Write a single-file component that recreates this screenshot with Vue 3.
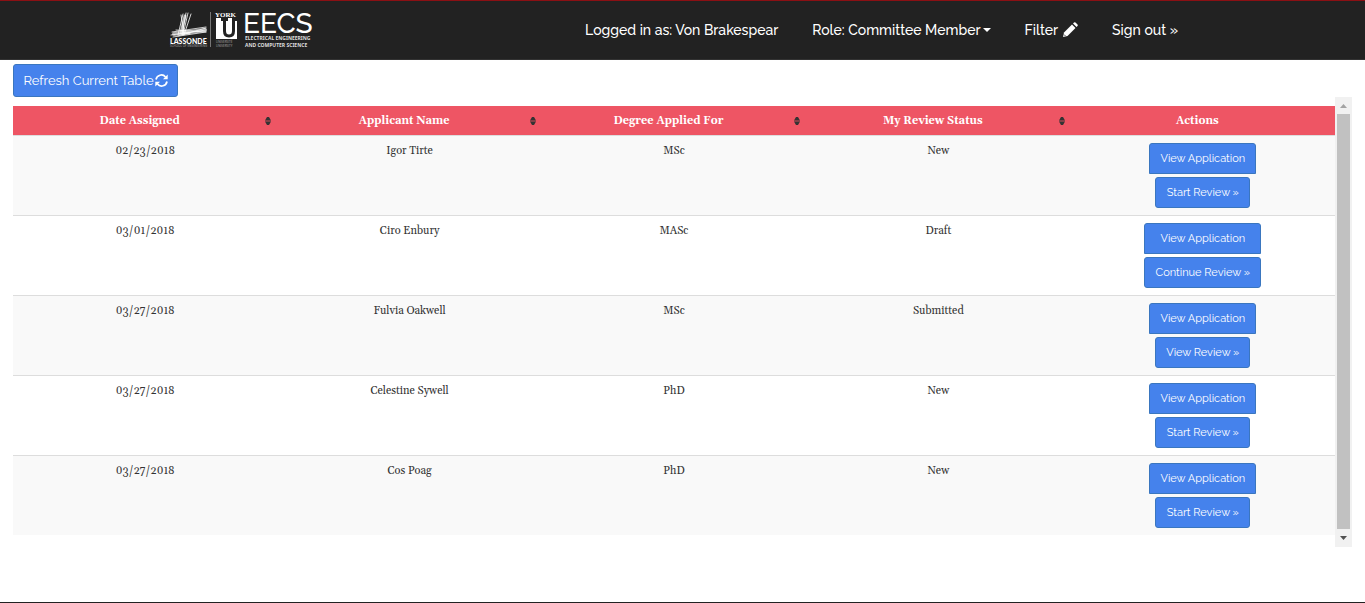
<script setup>
import { ref } from 'vue'

const columns = ['Date Assigned', 'Applicant Name', 'Degree Applied For', 'My Review Status']
const rows = ref([
  { date: '02/23/2018', name: 'Igor Tirte', degree: 'MSc', status: 'New', action: 'Start Review »' },
  { date: '03/01/2018', name: 'Ciro Enbury', degree: 'MASc', status: 'Draft', action: 'Continue Review »' },
  { date: '03/27/2018', name: 'Fulvia Oakwell', degree: 'MSc', status: 'Submitted', action: 'View Review »' },
  { date: '03/27/2018', name: 'Celestine Sywell', degree: 'PhD', status: 'New', action: 'Start Review »' },
  { date: '03/27/2018', name: 'Cos Poag', degree: 'PhD', status: 'New', action: 'Start Review »' }
])
</script>

<template>
  <div class="page">
    <header class="navbar">
      <div class="navbar-inner">
        <a class="brand" href="#" aria-label="Lassonde, York University EECS">
          <svg class="logo" width="148" height="40" viewBox="0 0 148 40">
            <g fill="none" stroke="#fff" stroke-linecap="round">
              <path d="M13 4 8 25M16 3l-4 22M18 3l-5 22M21 4l-7 21M11 5l3 18" stroke-width="1" opacity=".8" />
              <path d="M2 22l34-5M1 25l35-5M3 27l33-5M6 20l30 2M8 26l28-8" stroke-width="1" opacity=".75" />
              <path d="M15 6l-4 17h8" stroke-width="3" opacity=".7" />
              <path d="M4 24l31-4" stroke-width="4" opacity=".6" />
            </g>
            <text x="0" y="34" class="lassonde">LASSONDE</text>
            <text x="0" y="37" class="tiny">SCHOOL OF ENGINEERING</text>
            <path d="M40.500 2v35" stroke="#777" />
            <text x="45" y="7" class="york">YORK</text>
            <path d="M46 8h21v21H46z" fill="#fff" />
            <path d="M51 9.500h7M62 9.500h5M54.500 9v12q0 5 4.500 5t4.500-5V9" fill="none" stroke="#222" stroke-width="3" />
            <text x="46" y="33" class="tiny">UNIVERSITÉ</text>
            <text x="46" y="37" class="tiny">UNIVERSITY</text>
            <text x="73" y="23" class="eecs">EECS</text>
            <text x="75" y="30" class="dept">ELECTRICAL ENGINEERING</text>
            <text x="75" y="37" class="dept">AND COMPUTER SCIENCE</text>
          </svg>
        </a>
        <nav class="nav">
          <span class="nav-item user">Logged in as: Von Brakespear</span>
          <button type="button" class="nav-item role">Role: Committee Member<span class="caret"></span></button>
          <button type="button" class="nav-item filter">
            Filter
            <svg width="16" height="16" viewBox="0 0 16 16" fill="#fff">
              <path d="M1 15l1-4.500L10 2.500 13.500 6l-8 8z" />
              <path d="M11 1.500l1-1q.7-.7 1.500 0l2 2q.7.800 0 1.500l-1 1z" />
              <path d="M2 12.500L3.500 14" stroke="#222" stroke-width=".8" />
            </svg>
          </button>
          <a class="nav-item" href="#">Sign out »</a>
        </nav>
      </div>
    </header>

    <main class="content">
      <button type="button" class="btn refresh">
        Refresh Current Table
        <svg width="13" height="13" viewBox="0 0 13 13">
          <g fill="none" stroke="#fff" stroke-width="1.700">
            <path d="M1 5.500A5.400 5.400 0 0 1 10.500 3" />
            <path d="M12 7.500A5.400 5.400 0 0 1 2.500 10" />
          </g>
          <path d="M12.700.5v4.700H8zM.3 12.500V7.800H5z" fill="#fff" />
        </svg>
      </button>
      <div class="table-area">
        <table class="reviews">
          <thead>
            <tr>
              <th v-for="column in columns" :key="column" scope="col">
                <span class="heading">{{ column }}
                  <svg class="sort" width="6" height="8" viewBox="0 0 6 8" aria-hidden="true">
                    <path d="M0 3.500L2 0h2l2 3.500zM0 4.500h6L4 8H2z" fill="#333" />
                    <path d="M0 3.500h6v1H0z" fill="#733c43" />
                  </svg>
                </span>
              </th>
              <th scope="col"><span class="heading">Actions</span></th>
            </tr>
          </thead>
          <tbody>
            <tr v-for="(row, index) in rows" :key="index">
              <td>{{ row.date }}</td>
              <td>{{ row.name }}</td>
              <td>{{ row.degree }}</td>
              <td>{{ row.status }}</td>
              <td>
                <div class="actions">
                  <button type="button" class="btn small view">View Application</button>
                  <button type="button" class="btn small" :class="{ wide: row.status === 'Draft' }">{{ row.action }}</button>
                </div>
              </td>
            </tr>
          </tbody>
        </table>
        <div class="scrollbar" aria-hidden="true">
          <svg width="17" height="17" viewBox="0 0 17 17"><path d="M5 11h7L8.500 7z" fill="#a3a3a3" /></svg>
          <div class="thumb"></div>
          <svg width="17" height="18" viewBox="0 0 17 18"><path d="M5 7h7l-3.500 4z" fill="#505050" /></svg>
        </div>
      </div>
    </main>
    <footer class="footer"></footer>
  </div>
</template>

<style>
body {
  margin: 0;
  background: #fff;
}
</style>

<style scoped>
* {
  box-sizing: border-box;
}
.page {
  display: flex;
  flex-direction: column;
  min-height: 100vh;
  font-family: Raleway, Lato, sans-serif;
}
.navbar {
  height: 60px;
  background: #222;
  border-top: 1px solid #8b1014;
  border-bottom: 1px solid #333;
}
.navbar-inner {
  display: flex;
  align-items: center;
  justify-content: space-between;
  max-width: 1025px;
  height: 100%;
  margin: 0 auto;
}
.brand,
.logo {
  display: block;
}
.logo {
  fill: #fff;
  overflow: visible;
}
.lassonde {
  font: 900 7px Lato, sans-serif;
}
.tiny {
  font: 3px "Open Sans", sans-serif;
  fill: #aaa;
}
.york {
  font: bold 7px "Liberation Serif", serif;
}
.eecs {
  font: 500 28px Raleway, Lato, sans-serif;
}
.dept {
  font: bold 5px "Noto Sans", sans-serif;
  fill: #ddd;
}
.nav {
  display: flex;
  align-items: center;
}
.nav-item {
  display: flex;
  align-items: center;
  padding: 0 17px;
  border: 0;
  background: none;
  color: #fff;
  font: 500 14px/20px Raleway, Lato, sans-serif;
  text-decoration: none;
  white-space: nowrap;
}
.caret {
  margin-left: 2px;
  border: 4px solid transparent;
  border-top-color: #fff;
  border-bottom: 0;
}
.filter {
  gap: 4px;
}
.content {
  flex: 1;
  padding: 4px 13px 0;
}
.btn {
  border: 1px solid #3a76bf;
  border-radius: 3px;
  background: #4582ec;
  color: #fff;
  font-family: Raleway, Lato, sans-serif;
  white-space: nowrap;
}
.refresh {
  display: flex;
  align-items: center;
  justify-content: center;
  gap: 1px;
  min-width: 165px;
  height: 33px;
  padding: 0 9px;
  font-size: 13px;
}
.table-area {
  display: flex;
}
.reviews {
  flex: 1;
  width: 100%;
  margin: 9px 0 12px;
  border-collapse: collapse;
  table-layout: fixed;
  color: #333;
  font: 11px/16px Gelasio, "Liberation Serif", serif;
  text-align: center;
}
.reviews th {
  height: 29px;
  padding: 2px 6px 0 0;
  background: #ee5564;
  color: #fff;
  font-weight: bold;
}
.heading {
  display: block;
  position: relative;
  padding-right: 5px;
}
.sort {
  position: absolute;
  top: 4px;
  right: 0;
}
.reviews td {
  padding: 7px 8px;
  border-top: 1px solid #ddd;
  vertical-align: top;
}
.reviews tbody tr:nth-child(odd) {
  background: #f9f9f9;
}
.actions {
  display: inline-grid;
  justify-items: center;
  gap: 3px;
  vertical-align: top;
}
.small {
  min-width: 95px;
  height: 31px;
  padding: 0 10px;
  font-size: 11px;
}
.small.view {
  min-width: 107px;
  justify-self: stretch;
  border-radius: 3px 3px 0 0;
}
.small.wide {
  min-width: 117px;
}
.scrollbar {
  display: flex;
  flex-direction: column;
  flex: 0 0 17px;
  background: #f1f1f1;
}
.scrollbar svg {
  flex: none;
}
.thumb {
  flex: 1;
  margin: 0 2px;
  background: #c1c1c1;
}
.footer {
  height: 1px;
  background: #222;
}
</style>
